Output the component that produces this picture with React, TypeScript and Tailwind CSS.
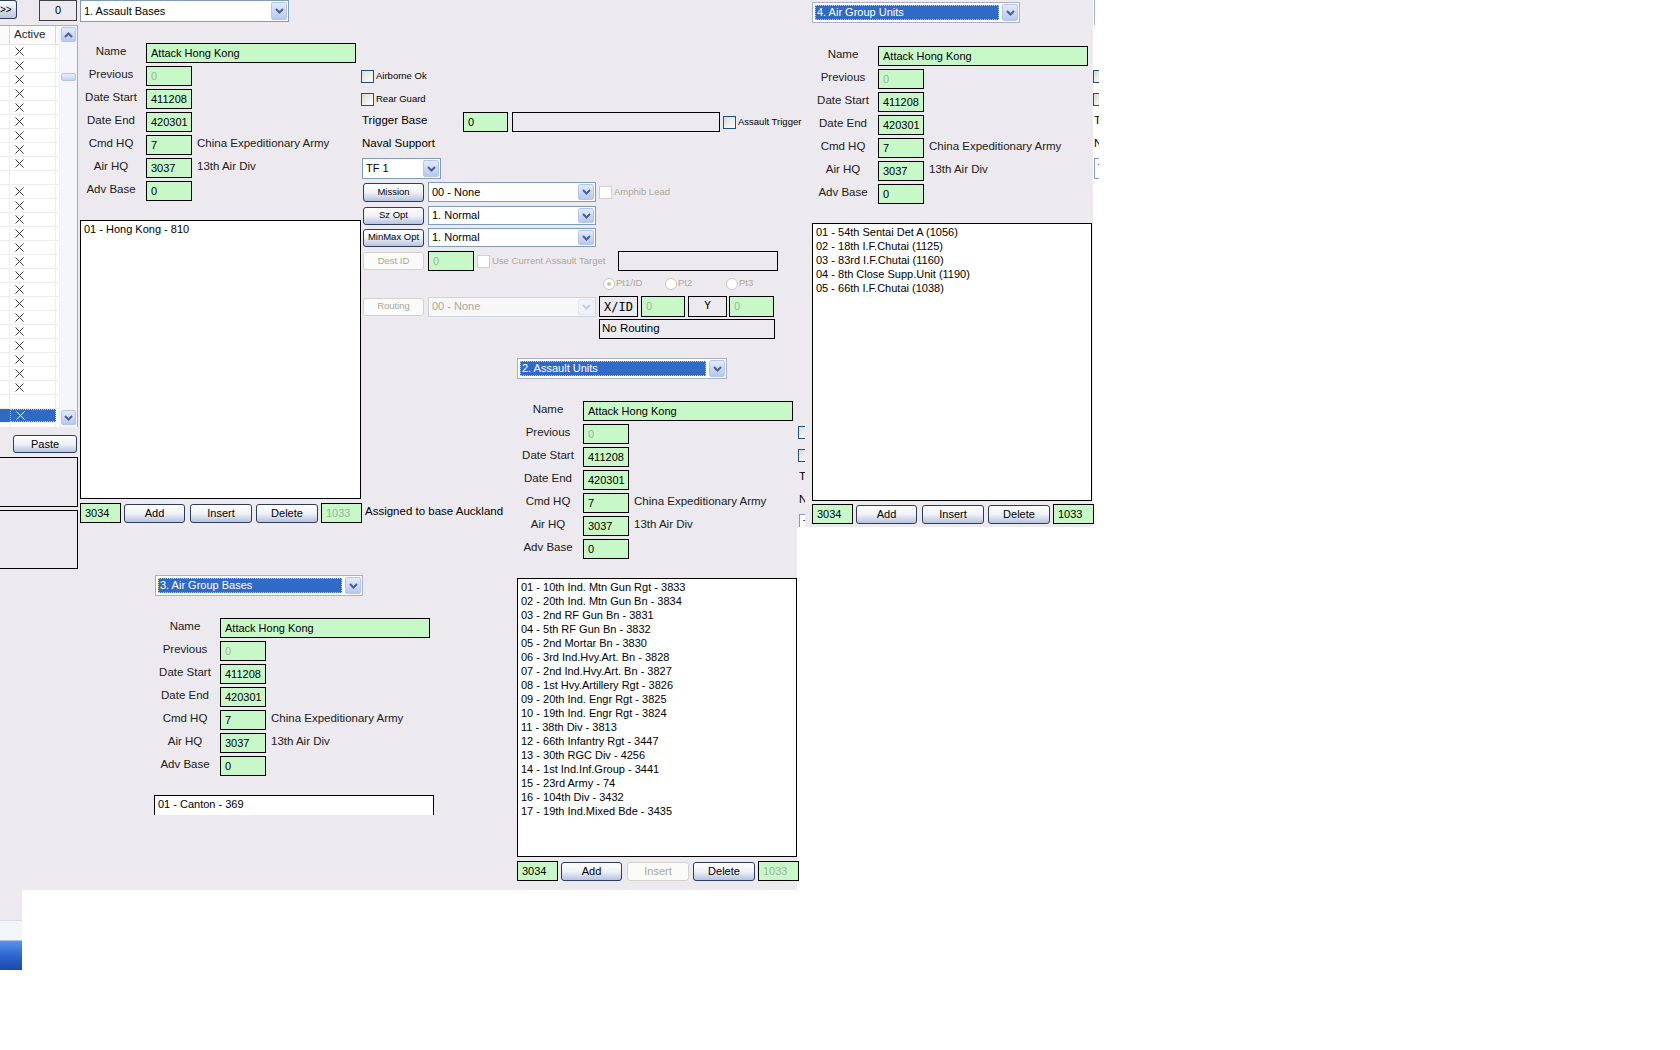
import React from "react";

const BG = "bg-[#eceaef]";

const UNITS = [
  "01 - 10th Ind. Mtn Gun Rgt - 3833",
  "02 - 20th Ind. Mtn Gun Bn - 3834",
  "03 - 2nd RF Gun Bn - 3831",
  "04 - 5th RF Gun Bn - 3832",
  "05 - 2nd Mortar Bn - 3830",
  "06 - 3rd Ind.Hvy.Art. Bn - 3828",
  "07 - 2nd Ind.Hvy.Art. Bn - 3827",
  "08 - 1st Hvy.Artillery Rgt - 3826",
  "09 - 20th Ind. Engr Rgt - 3825",
  "10 - 19th Ind. Engr Rgt - 3824",
  "11 - 38th Div - 3813",
  "12 - 66th Infantry Rgt - 3447",
  "13 - 30th RGC Div - 4256",
  "14 - 1st Ind.Inf.Group - 3441",
  "15 - 23rd Army - 74",
  "16 - 104th Div - 3432",
  "17 - 19th Ind.Mixed Bde - 3435",
];

const AIR = [
  "01 - 54th Sentai Det A (1056)",
  "02 - 18th I.F.Chutai (1125)",
  "03 - 83rd I.F.Chutai (1160)",
  "04 - 8th Close Supp.Unit (1190)",
  "05 - 66th I.F.Chutai (1038)",
];

const FORM_ROWS: [string, string, boolean, string][] = [
  ["Previous", "0", true, ""],
  ["Date Start", "411208", false, ""],
  ["Date End", "420301", false, ""],
  ["Cmd HQ", "7", false, "China Expeditionary Army"],
  ["Air HQ", "3037", false, "13th Air Div"],
  ["Adv Base", "0", false, ""],
];

function Chevron({ dim = false, up = false }: { dim?: boolean; up?: boolean }) {
  return (
    <svg width="9" height="6" viewBox="0 0 9 6">
      <path
        d={up ? "M1 5l3.5-3.5L8 5" : "M1 1l3.5 3.5L8 1"}
        fill="none"
        stroke={dim ? "#c3cde2" : "#4d6185"}
        strokeWidth="2"
      />
    </svg>
  );
}

function ArrowBtn({ dim = false, up = false, className = "" }: { dim?: boolean; up?: boolean; className?: string }) {
  return (
    <div
      className={`flex items-center justify-center rounded-[2px] border ${
        dim ? "border-[#e0e6f3] bg-[#f0f3fa]" : "border-[#b4c5ec] bg-linear-to-b from-[#e2eafd] to-[#b6c8f2]"
      } ${className}`}
    >
      <Chevron dim={dim} up={up} />
    </div>
  );
}

function Combo({ className = "", text, sel = false, dim = false }: { className?: string; text: string; sel?: boolean; dim?: boolean }) {
  return (
    <div
      className={`flex shrink-0 border text-[11px] ${
        dim ? "border-[#ccd4e4] bg-[#f7f7f8] text-[#aca899]" : sel ? "border-[#a9b2c4] bg-white" : "border-[#7f9db9] bg-white"
      } ${className}`}
    >
      {sel ? (
        <div className="m-[2px] flex-1 flex items-center pl-[1px] bg-[#316ac5] text-white border border-dotted border-[#d8c890] whitespace-nowrap">
          {text}
        </div>
      ) : (
        <div className="flex-1 flex items-center pl-[3px] whitespace-nowrap">{text}</div>
      )}
      <ArrowBtn dim={dim} className="w-[16px] m-px" />
    </div>
  );
}

function XpButton({ className = "", children, dim = false }: { className?: string; children: React.ReactNode; dim?: boolean }) {
  return (
    <div
      className={`flex shrink-0 items-center justify-center rounded-[3px] border whitespace-nowrap ${
        dim
          ? "border-[#d4d2c8] bg-[#fafaf8] text-[#aca899]"
          : "border-[#2d3b5c] bg-linear-to-b from-white via-[#eef1f8] to-[#b7c4dc] text-black"
      } ${className}`}
    >
      {children}
    </div>
  );
}

function Green({ className = "", children, dim = false, top = false }: { className?: string; children: React.ReactNode; dim?: boolean; top?: boolean }) {
  return (
    <div
      className={`flex shrink-0 pl-[4px] border border-black bg-[#c8f8c8] text-[11px] ${top ? "items-start pt-[1px]" : "items-center"} ${
        dim ? "text-[#9fb29f]" : "text-black"
      } ${className}`}
    >
      {children}
    </div>
  );
}

function Check({ dim = false }: { dim?: boolean }) {
  return (
    <div
      className={`w-[13px] h-[13px] shrink-0 border ${
        dim ? "border-[#d4d2c8] bg-white" : "border-[#1c5180] bg-linear-to-br from-[#dcdcd6] to-white"
      }`}
    />
  );
}

function Radio({ on = false }: { on?: boolean }) {
  return (
    <div className="w-[12px] h-[12px] shrink-0 rounded-full border border-[#cac8bb] bg-white flex items-center justify-center">
      {on && <div className="w-[4px] h-[4px] rounded-full bg-[#c5c3b6]" />}
    </div>
  );
}

function XMark({ white = false }: { white?: boolean }) {
  return (
    <svg width="9" height="9" viewBox="0 0 9 9">
      <path d="M0.5 0.5L8.5 8.5M8.5 0.5L0.5 8.5" stroke={white ? "#ffffff" : "#3a3a3a"} strokeWidth="1" />
    </svg>
  );
}

function FormRow({ label, children }: { label: string; children: React.ReactNode }) {
  return (
    <div className="flex items-center h-[20px]">
      <div className="w-[62px] mr-[4px] shrink-0 text-center text-[11.5px] text-[#202020] -mt-[3px] whitespace-nowrap">{label}</div>
      {children}
    </div>
  );
}

function DataForm() {
  return (
    <div className="flex flex-col gap-[3px]">
      <FormRow label="Name">
        <Green className="w-[210px] h-[20px]">Attack Hong Kong</Green>
      </FormRow>
      {FORM_ROWS.map(([label, value, dim, side]) => (
        <FormRow key={label} label={label}>
          <Green className="w-[46px] h-[20px]" dim={dim}>
            {value}
          </Green>
          {side && <span className="ml-[5px] -mt-[3px] text-[11.5px] text-[#202020] whitespace-nowrap">{side}</span>}
        </FormRow>
      ))}
    </div>
  );
}

function ListBox({ items, className = "" }: { items: string[]; className?: string }) {
  return (
    <div className={`border border-black bg-white pl-[3px] pt-[1px] text-[11px] leading-[14px] overflow-hidden ${className}`}>
      {items.map((i) => (
        <div key={i} className="whitespace-nowrap">
          {i}
        </div>
      ))}
    </div>
  );
}

function BottomRow({ insertDim = false, rightDim = false }: { insertDim?: boolean; rightDim?: boolean }) {
  return (
    <div className="flex items-center h-[20px] shrink-0">
      <Green className="w-[41px] h-[20px]" top>
        3034
      </Green>
      <XpButton className="ml-[3px] w-[61px] h-[19px] text-[11px]">Add</XpButton>
      <XpButton className="ml-[5px] w-[62px] h-[19px] text-[11px]" dim={insertDim}>
        Insert
      </XpButton>
      <XpButton className="ml-[4px] w-[62px] h-[19px] text-[11px]">Delete</XpButton>
      <Green className="ml-[3px] w-[41px] h-[20px]" top dim={rightDim}>
        1033
      </Green>
    </div>
  );
}

function CheckLabel({ label, dim = false, className = "" }: { label: string; dim?: boolean; className?: string }) {
  return (
    <div className={`flex shrink-0 items-center gap-[2px] ${className}`}>
      <Check dim={dim} />
      <span className={`text-[9.5px] whitespace-nowrap ${dim ? "text-[#aca899]" : "text-black"}`}>{label}</span>
    </div>
  );
}

function MidControls() {
  return (
    <div className="flex flex-col pt-[70px] w-[436px]">
      <CheckLabel label="Airborne Ok" className="h-[13px]" />
      <CheckLabel label="Rear Guard" className="mt-[10px] h-[13px]" />
      <div className="mt-[6px] flex items-center h-[20px]">
        <span className="ml-[1px] w-[101px] shrink-0 text-[11.5px] -mt-[3px] whitespace-nowrap">Trigger Base</span>
        <Green className="w-[45px] h-[20px]">0</Green>
        <div className="ml-[4px] w-[208px] h-[20px] shrink-0 border border-black" />
        <CheckLabel label="Assault Trigger" className="ml-[3px]" />
      </div>
      <div className="mt-[4px] h-[14px] ml-[1px] text-[11.5px] leading-[14px] whitespace-nowrap">Naval Support</div>
      <Combo className="mt-[8px] ml-[1px] w-[79px] h-[21px]" text="TF 1" />
      <div className="mt-[3px] flex items-center h-[20px]">
        <XpButton className="ml-[2px] w-[61px] h-[19px] text-[9.5px]">Mission</XpButton>
        <Combo className="ml-[4px] w-[168px] h-[20px]" text="00 - None" />
        <CheckLabel label="Amphib Lead" dim className="ml-[3px]" />
      </div>
      <div className="mt-[4px] flex items-center h-[19px]">
        <XpButton className="ml-[2px] w-[61px] h-[18px] text-[9.5px]">Sz Opt</XpButton>
        <Combo className="ml-[4px] w-[168px] h-[19px]" text="1. Normal" />
      </div>
      <div className="mt-[3px] flex items-center h-[19px]">
        <XpButton className="ml-[2px] w-[61px] h-[18px] text-[9.5px]">MinMax Opt</XpButton>
        <Combo className="ml-[4px] w-[168px] h-[19px]" text="1. Normal" />
      </div>
      <div className="mt-[4px] flex items-center h-[20px]">
        <XpButton className="ml-[2px] w-[61px] h-[18px] text-[9.5px]" dim>
          Dest ID
        </XpButton>
        <Green className="ml-[4px] w-[46px] h-[20px]" top dim>
          0
        </Green>
        <div className="ml-[3px] w-[141px] shrink-0">
          <CheckLabel label="Use Current Assault Target" dim />
        </div>
        <div className="w-[160px] h-[20px] shrink-0 border border-black" />
      </div>
      <div className="mt-[6px] flex items-center h-[13px] pl-[242px]">
        <div className="w-[62px] shrink-0 flex items-center gap-[1px]">
          <Radio on />
          <span className="text-[9.5px] text-[#aca899]">Pt1/ID</span>
        </div>
        <div className="w-[61px] shrink-0 flex items-center gap-[1px]">
          <Radio />
          <span className="text-[9.5px] text-[#aca899]">Pt2</span>
        </div>
        <div className="flex shrink-0 items-center gap-[1px]">
          <Radio />
          <span className="text-[9.5px] text-[#aca899]">Pt3</span>
        </div>
      </div>
      <div className="mt-[6px] flex items-center h-[21px]">
        <XpButton className="ml-[2px] w-[61px] h-[18px] text-[9.5px]" dim>
          Routing
        </XpButton>
        <Combo className="ml-[4px] w-[168px] h-[20px]" text="00 - None" dim />
        <div className="ml-[3px] w-[39px] h-[21px] shrink-0 border border-black flex items-center justify-center text-[12px] font-['DejaVu_Sans_Mono',monospace]">
          X/ID
        </div>
        <Green className="ml-[3px] w-[44px] h-[21px]" top dim>
          0
        </Green>
        <div className="ml-[3px] w-[39px] h-[21px] shrink-0 border border-black flex items-center justify-center text-[11px] font-['DejaVu_Sans_Mono',monospace]">
          Y
        </div>
        <Green className="ml-[2px] w-[45px] h-[21px]" top dim>
          0
        </Green>
      </div>
      <div className="mt-[2px] ml-[238px] w-[176px] h-[20px] border border-black flex items-center pl-[2px] text-[11.5px] whitespace-nowrap">
        No Routing
      </div>
    </div>
  );
}

function Sidebar() {
  const rows = Array.from({ length: 28 }, (_, i) => i);
  return (
    <div className="w-[78px] shrink-0 flex flex-col">
      <div className="flex items-start h-[25px]">
        <div className="w-[17px] h-[19px] shrink-0 rounded-r-[3px] border border-l-0 border-[#2d3b5c] bg-linear-to-b from-white to-[#b9c5dc] text-[10px] flex items-center leading-none">
          &gt;&gt;
        </div>
        <div className="ml-[22px] w-[38px] h-[21px] shrink-0 border border-[#404040] flex items-center justify-center text-[11px]">
          0
        </div>
      </div>
      <div className="h-[402px] w-[78px] border-t border-r border-[#a6adb8] bg-white flex overflow-hidden">
        <div className="w-[59px] flex flex-col shrink-0">
          <div className="h-[19px] flex shrink-0 border-b border-[#e4e4e4] bg-[#fbfbfb]">
            <div className="w-[10px] border-r border-[#d8d8d8]" />
            <div className="w-[46px] border-r border-[#d8d8d8] pl-[4px] flex items-center text-[11.5px] text-[#222]">Active</div>
            <div className="flex-1" />
          </div>
          {rows.map((i) => {
            const sel = i === 26;
            const blank = i === 9 || i === 25 || i === 27;
            return (
              <div key={i} className="h-[14px] shrink-0 flex border-b border-[#ededed]">
                <div className={`w-[10px] border-r ${sel ? "bg-[#316ac5] border-[#316ac5]" : "border-[#ededed]"}`} />
                <div
                  className={`w-[46px] flex items-center pl-[5px] ${
                    sel ? "bg-[#316ac5] border border-dotted border-[#b9c8e8] mr-[2px]" : "border-r border-[#ededed]"
                  }`}
                >
                  {!blank && <XMark white={sel} />}
                </div>
                <div className="flex-1" />
              </div>
            );
          })}
        </div>
        <div className="w-[18px] shrink-0 flex flex-col bg-[#f4f6fb] border-l border-[#eef0f6]">
          <ArrowBtn up className="mt-[1px] mx-[1px] h-[15px]" />
          <div className="mt-[31px] mx-[1px] h-[8px] rounded-[2px] border border-[#b4c5ec] bg-linear-to-b from-[#e6edfd] to-[#c4d3f5]" />
          <div className="flex-1" />
          <ArrowBtn className="mb-[2px] mx-[1px] h-[15px]" />
        </div>
      </div>
      <XpButton className="mt-[8px] ml-[13px] w-[64px] h-[18px] text-[11px]">Paste</XpButton>
      <div className="mt-[4px] w-[78px] h-[50px] border-y border-r border-black" />
      <div className="mt-[3px] w-[78px] h-[59px] border-y border-r border-black" />
    </div>
  );
}

export default function App() {
  return (
    <div className="w-[1680px] h-[1050px] bg-white overflow-hidden text-black font-['Liberation_Sans',Arial,sans-serif]">
      <div className="flex items-start">
        <div className="relative z-10 flex flex-col w-[797px] shrink-0">
          <div className={`h-[890px] ${BG} flex items-start`}>
            <Sidebar />
            <div className="ml-[2px] w-[281px] shrink-0 flex flex-col">
              <Combo className="w-[209px] h-[22px]" text="1. Assault Bases" />
              <div className="mt-[21px]">
                <DataForm />
              </div>
              <ListBox className="mt-[19px] w-[281px] h-[279px]" items={["01 - Hong Kong - 810"]} />
              <div className="mt-[4px] flex items-center">
                <BottomRow rightDim />
                <span className="ml-[3px] -mt-[2px] whitespace-nowrap text-[11.5px]">Assigned to base Auckland</span>
              </div>
              <div className="mt-[52px] ml-[74px] w-[280px] flex flex-col">
                <Combo className="ml-[1px] w-[208px] h-[21px]" text="3. Air Group Bases" sel />
                <div className="mt-[22px]">
                  <DataForm />
                </div>
                <div className="mt-[19px] w-[280px] h-[20px] border border-b-0 border-black bg-white pl-[3px] pt-[1px] text-[11px] leading-[14px]">
                  01 - Canton - 369
                </div>
              </div>
            </div>
            <div className="w-[436px] shrink-0 flex flex-col">
              <MidControls />
              <div className="mt-[19px] ml-[156px] w-[280px] flex flex-col">
                <Combo className="w-[210px] h-[21px]" text="2. Assault Units" sel />
                <div className="mt-[22px]">
                  <DataForm />
                </div>
                <ListBox className="mt-[19px] w-[280px] h-[279px]" items={UNITS} />
                <div className="mt-[4px]">
                  <BottomRow insertDim rightDim />
                </div>
              </div>
            </div>
          </div>
          <div className={`w-[22px] h-[30px] ${BG}`} />
          <div className="w-[22px] h-[20px] bg-[#f4f5f9] border-t border-[#d6dae4]" />
          <div className="w-[22px] h-[30px] bg-linear-to-b from-[#5d92e8] via-[#2f66d0] to-[#1d48a8] border-t border-[#a6c4f2]" />
        </div>

        <div className={`w-[296px] h-[527px] shrink-0 ${BG} flex items-start`}>
          <div className="ml-[1px] w-[7px] h-[527px] shrink-0 overflow-hidden">
            <div className="w-[436px] mt-[356px]">
              <MidControls />
            </div>
          </div>
          <div className="ml-[7px] mt-[2px] w-[280px] shrink-0 flex flex-col">
            <Combo className="w-[208px] h-[21px]" text="4. Air Group Units" sel />
            <div className="mt-[23px]">
              <DataForm />
            </div>
            <ListBox className="mt-[19px] w-[280px] h-[278px]" items={AIR} />
            <div className="mt-[3px]">
              <BottomRow />
            </div>
          </div>
        </div>

        <div className="relative w-[6px] h-[180px] shrink-0 overflow-hidden">
          <div className="absolute left-[1px] top-0 h-[25px] w-[1px] bg-[#9db2d6]" />
          <div className="w-[436px]">
            <MidControls />
          </div>
        </div>
      </div>
    </div>
  );
}
